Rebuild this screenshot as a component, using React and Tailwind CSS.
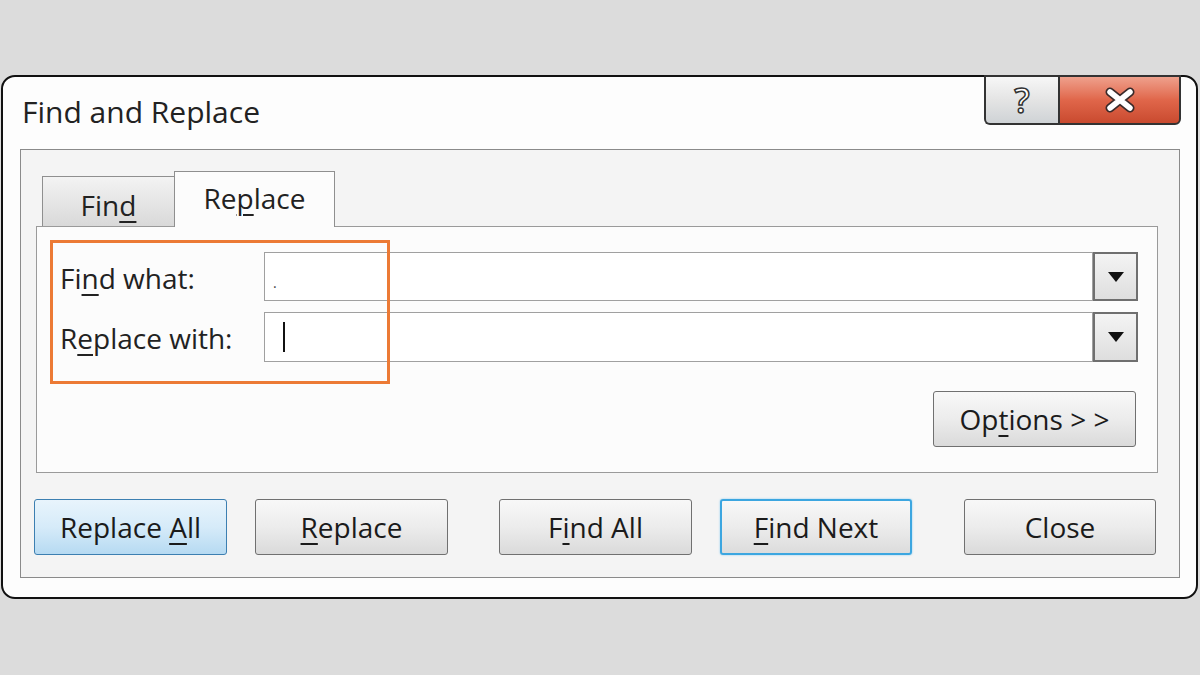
import React from 'react'

const font = { fontFamily: "'Open Sans', 'Noto Sans', sans-serif" }

// underlined access-key letter
const U = ({ children }) => <span className="underline decoration-[2px] underline-offset-[5px]">{children}</span>

const DialogButton = ({ children, variant = 'plain', className = '' }) => {
  const look =
    variant === 'primary'
      ? 'border-[#3c7fb1] bg-gradient-to-b from-[#e8f4fc] via-[#d6ebf9] to-[#b6daf2]'
      : variant === 'focus'
      ? 'border-[#3ca6e0] border-2 shadow-[0_0_2px_#7cc4ee] bg-gradient-to-b from-[#f8f8f8] via-[#ececec] to-[#dcdcdc]'
      : 'border-[#707070] bg-gradient-to-b from-[#f8f8f8] via-[#ececec] to-[#dadada]'
  return (
    <button
      className={`h-[56px] flex items-center justify-center rounded-[3px] border text-[28px] text-[#1b1b1b] ${look} ${className}`}
    >
      <span className="whitespace-pre">{children}</span>
    </button>
  )
}

const DropArrow = () => (
  <div className="w-[45px] h-full bg-gradient-to-b from-[#f4f4f4] to-[#dedede] flex items-center justify-center border-2 border-[#6f6f6f]">
    <svg width="16" height="10" viewBox="0 0 16 10">
      <path d="M0 0 L16 0 L8 10 Z" fill="#111" />
    </svg>
  </div>
)

export default function App() {
  return (
    <div className="w-[1200px] h-[675px] bg-[#dcdcdc] pt-[75px] pl-[1px] overflow-hidden" style={font}>
      <div className="w-[1197px] h-[524px] border-2 border-[#111] rounded-[14px] bg-[#fdfdfd] flex flex-col">
        {/* Title bar */}
        <div className="h-[74px] flex items-start justify-between pl-[19px] pr-[15px] -mt-[2px]">
          <div className="pt-[14px] text-[30px] text-[#222]">Find and Replace</div>
          <div className="flex h-[50px]">
            <div className="w-[74px] h-full border-2 border-[#333] border-r-0 rounded-bl-[6px] bg-gradient-to-b from-[#f7f7f7] via-[#e4e4e4] to-[#cfd3d6] flex items-center justify-center">
              <span className="text-[34px] font-semibold leading-none text-white [-webkit-text-stroke:1.5px_#333]">?</span>
            </div>
            <div className="w-[123px] h-full border-2 border-[#333] rounded-br-[6px] bg-gradient-to-b from-[#eea08c] via-[#e0664a] to-[#c94a2f] flex items-center justify-center">
              <svg width="32" height="26" viewBox="0 0 32 26">
                <path d="M6 5 L26 21 M26 5 L6 21" stroke="#3a2a2a" strokeWidth="9" strokeLinecap="round" />
                <path d="M6 5 L26 21 M26 5 L6 21" stroke="#fff" strokeWidth="5.5" strokeLinecap="round" />
              </svg>
            </div>
          </div>
        </div>

        {/* Main panel */}
        <div className="ml-[17px] mr-[16px] h-[429px] border border-[#8a8a8a] bg-[#f4f4f4] flex flex-col">
          {/* Tabs */}
          <div className="mt-[21px] h-[55px] flex items-end pl-[21px] relative z-10">
            <div className="w-[132px] h-[50px] border border-[#8f8f8f] border-b-0 border-r-0 bg-gradient-to-b from-[#f3f3f3] to-[#d9d9d9] flex items-center justify-center pt-[6px] text-[28px] text-[#222]">
              <span>Fin<U>d</U></span>
            </div>
            <div className="w-[161px] h-[56px] -mb-[1px] border border-[#8f8f8f] border-b-0 bg-[#fcfcfc] flex items-center justify-center pb-[3px] text-[28px] text-[#222]">
              <span>Re<U>p</U>lace</span>
            </div>
          </div>

          {/* Tab content */}
          <div className="ml-[15px] mr-[21px] h-[247px] border border-[#9a9a9a] bg-[#fcfcfc] relative pt-[25px] pl-[23px] pr-[19px]">
            <div className="flex items-center h-[49px]">
              <div className="w-[204px] text-[28px] text-[#222] pt-[2px]">Fi<U>n</U>d what:</div>
              <div className="flex-1 h-full border border-[#a0a0a0] bg-white flex items-end">
                <span className="ml-[8px] mb-[10px] text-[14px] leading-none text-[#444]">.</span>
              </div>
              <div className="h-full"><DropArrow /></div>
            </div>
            <div className="flex items-center h-[50px] mt-[11px]">
              <div className="w-[204px] text-[28px] text-[#222] pt-[2px]">R<U>e</U>place with:</div>
              <div className="flex-1 h-full border border-[#a0a0a0] bg-white flex items-center">
                <span className="ml-[18px] w-[2px] h-[30px] bg-[#111]" />
              </div>
              <div className="h-full"><DropArrow /></div>
            </div>
            <div className="flex justify-end mt-[29px] pr-[2px]">
              <DialogButton className="w-[203px] h-[55px]">
                Op<U>t</U>ions &gt; &gt;
              </DialogButton>
            </div>

            {/* orange highlight annotation */}
            <div className="absolute left-[13px] top-[13px] w-[340px] h-[144px] border-[3px] border-[#ec7a35] pointer-events-none" />
          </div>

          {/* Bottom buttons */}
          <div className="flex mt-[26px]">
            <DialogButton variant="primary" className="ml-[13px] w-[193px]">
              Replace <U>A</U>ll
            </DialogButton>
            <DialogButton className="ml-[28px] w-[193px]">
              <U>R</U>eplace
            </DialogButton>
            <DialogButton className="ml-[51px] w-[193px]">
              F<U>i</U>nd All
            </DialogButton>
            <DialogButton variant="focus" className="ml-[28px] w-[192px]">
              <U>F</U>ind Next
            </DialogButton>
            <DialogButton className="ml-[52px] w-[192px]">
              Close
            </DialogButton>
          </div>
        </div>
      </div>
    </div>
  )
}
